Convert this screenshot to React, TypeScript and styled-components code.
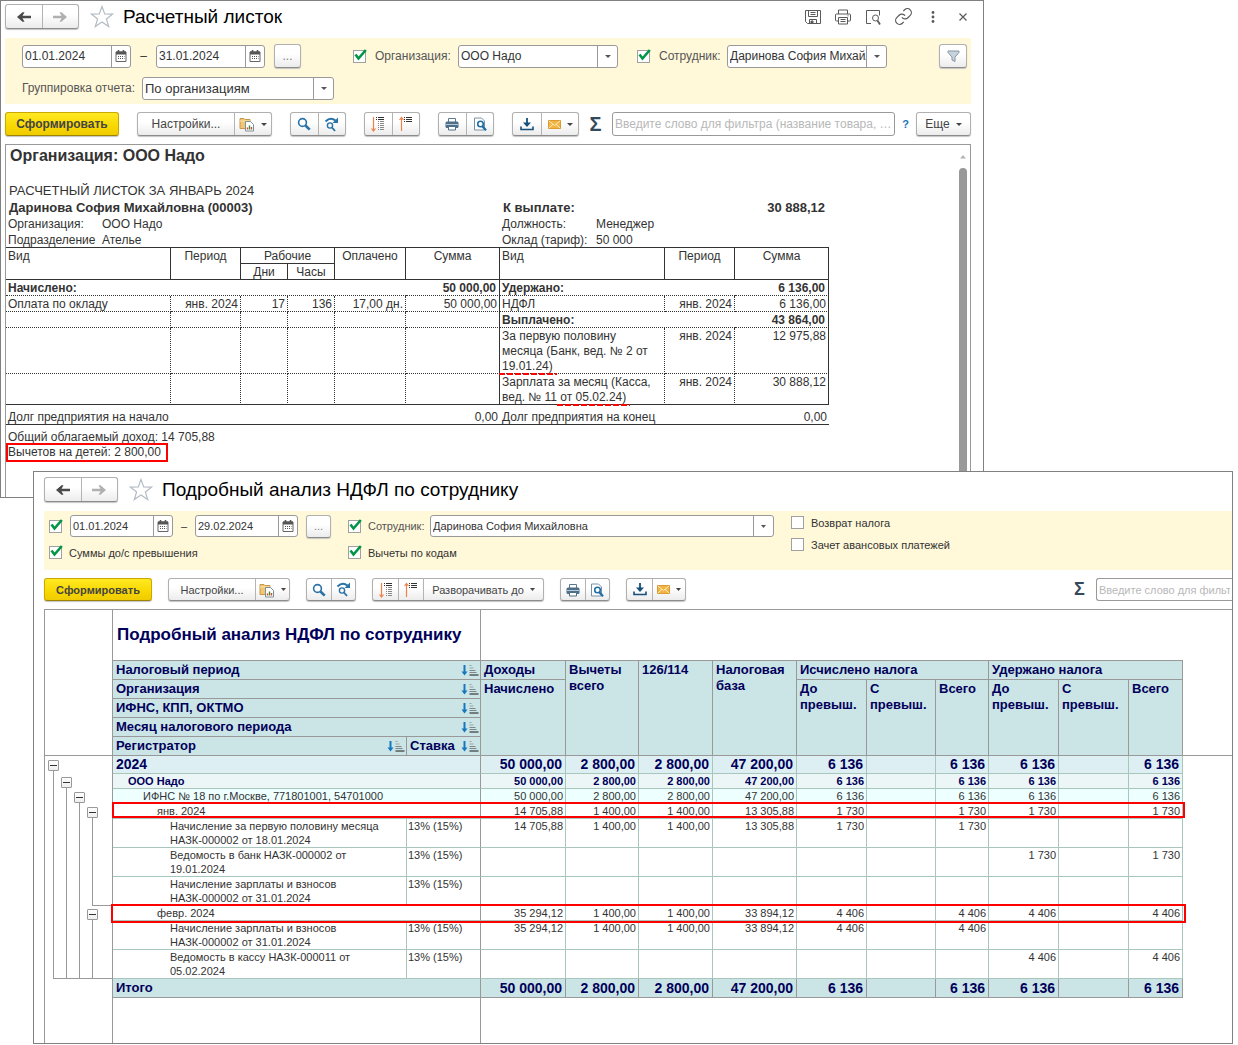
import React from "react";
import styled, { createGlobalStyle, css } from "styled-components";

const Global = createGlobalStyle`
  *, *::before, *::after { box-sizing: border-box; }
  body { margin: 0; background: #fff; }
  button, input, select { font: inherit; color: inherit; margin: 0; }
`;

/* ---------- windows ---------- */

const Desktop = styled.main`
  font-family: "Liberation Sans", Arial, sans-serif;
  color: #333;
  overflow: hidden;
`;

const Window = styled.section<{ $dense?: boolean }>`
  --control: ${(p) => (p.$dense ? "23px" : "24px")};
  --field: ${(p) => (p.$dense ? "22px" : "23px")};
  --text: ${(p) => (p.$dense ? "11px" : "12px")};
  --icon-button: ${(p) => (p.$dense ? "25px" : "28px")};
  --caret: ${(p) => (p.$dense ? "5px" : "6px")};
  --sigma: ${(p) => (p.$dense ? "18px" : "20px")};
  position: relative;
  background: #fff;
  border: 1px solid #808080;
  font-size: var(--text);
  overflow: hidden;
`;

const PayslipWindow = styled(Window)`
  margin-right: 254px;
  padding: 0 12px 0 4px;
`;

const AnalysisWindow = styled(Window)`
  margin: -27px 5px 0 33px;
  padding-left: 10px;
`;

const TitleBar = styled.header<{ $top: number }>`
  display: flex;
  align-items: center;
  padding: ${(p) => p.$top}px 0 9px;
`;

const Title = styled.h1`
  flex: 1;
  margin: 0 0 0 9px;
  font-size: 19px;
  line-height: 24px;
  font-weight: 400;
  color: #000;
`;

const TitleTools = styled.div`
  display: flex;
  gap: 6px;
  margin-right: -4px;
`;

const PlainButton = styled.button`
  display: grid;
  place-items: center;
  width: 24px;
  height: 24px;
  padding: 0;
  border: 0;
  background: none;
  color: #5a5a5a;
`;

const StarButton = styled(PlainButton)`
  margin-left: 11px;
  color: #b4bcc4;
`;

/* ---------- controls ---------- */

const raised = css`
  border: 1px solid #b0b0b0;
  border-bottom-color: #8c8c8c;
  border-radius: 3px;
  background: linear-gradient(#fff 40%, #ececec);
  box-shadow: 0 1px 1px #c4c4c4;
`;

const ButtonGroup = styled.div`
  ${raised}
  display: flex;
  height: var(--control);
  overflow: hidden;
`;

const NavGroup = styled(ButtonGroup)`
  width: 74px;
  height: 25px;
`;

const GroupButton = styled.button<{ $width?: number; $muted?: boolean }>`
  flex: ${(p) => (p.$width ? `0 0 ${p.$width}px` : "1")};
  display: flex;
  align-items: center;
  justify-content: center;
  gap: 6px;
  min-width: 0;
  padding: 0;
  border: 0;
  background: none;
  color: ${(p) => (p.$muted ? "#aaa" : "#444")};
  white-space: nowrap;
  & + & { border-left: 1px solid #b4b4b4; }
`;

const IconPair = styled(ButtonGroup)`
  width: calc(var(--icon-button) * 2);
`;

const Button = styled.button<{ $width: number }>`
  ${raised}
  display: flex;
  align-items: center;
  justify-content: center;
  gap: 6px;
  width: ${(p) => p.$width}px;
  height: var(--control);
  padding: 0;
  color: #444;
`;

const MoreButton = styled(Button)`
  color: #808080;
`;

const PrimaryButton = styled(Button)`
  background: linear-gradient(#ffe924, #f8d800 60%, #efcb00);
  border-color: #c9a800;
  border-bottom-color: #9c8300;
  font-weight: 700;
`;

const FieldBox = styled.div<{ $width: number }>`
  display: flex;
  width: ${(p) => p.$width}px;
  height: var(--field);
  background: #fff;
  border: 1px solid #999;
  border-radius: 3px;
  overflow: hidden;
`;

const FieldInput = styled.input`
  flex: 1;
  min-width: 0;
  padding: 0 0 0 2px;
  border: 0;
  background: none;
  outline: 0;
`;

const FieldButton = styled.button`
  display: grid;
  place-items: center;
  width: 19px;
  padding: 0;
  border: 0;
  border-left: 1px solid #999;
  background: none;
  color: #555;
`;

const ComboBox = styled(FieldBox)`
  display: grid;
  grid-template-columns: 1fr 19px;
`;

const ComboSelect = styled.select<{ $large?: boolean }>`
  grid-area: 1 / 1 / 2 / 2;
  min-width: 0;
  padding: 0 0 0 2px;
  border: 0;
  border-right: 1px solid #999;
  border-radius: 0;
  background: none;
  appearance: none;
  outline: 0;
  overflow: hidden;
  white-space: nowrap;
  font-size: ${(p) => (p.$large ? "13px" : "inherit")};
`;

const ComboArrow = styled.span`
  display: grid;
  place-items: center;
  pointer-events: none;
  color: #555;
`;

const CheckBox = styled.span`
  display: grid;
  width: 13px;
  height: 13px;
  flex: none;
  & > * { grid-area: 1 / 1; }
  & > svg { display: none; pointer-events: none; overflow: visible; }
  & > input:checked + svg { display: block; }
`;

const CheckInput = styled.input`
  appearance: none;
  width: 13px;
  height: 13px;
  border: 1px solid #a0a0a0;
  background: #fff;
`;

const Label = styled.label<{ $width?: number; $strong?: boolean }>`
  width: ${(p) => (p.$width ? `${p.$width}px` : "auto")};
  flex: none;
  color: ${(p) => (p.$strong ? "#333" : "#555")};
  white-space: nowrap;
`;

const Dash = styled.span<{ $width: number }>`
  width: ${(p) => p.$width}px;
  text-align: center;
`;

/* ---------- filter panels and toolbars ---------- */

const Panel = styled.div`
  background: #fff8d9;
`;

const PayslipFilters = styled(Panel)`
  display: grid;
  gap: 8px;
  padding: 6px 4px 4px 17px;
`;

const AnalysisFilters = styled(Panel)`
  display: grid;
  grid-template-columns: 299px 443px 1fr;
  padding: 4px 0 10px 5px;
`;

const FilterColumn = styled.div<{ $gap: number }>`
  display: flex;
  flex-direction: column;
  gap: ${(p) => p.$gap}px;
`;

const FilterRow = styled.div<{ $height: number }>`
  display: flex;
  align-items: center;
  height: ${(p) => p.$height}px;
`;

const CheckSlot = styled.span<{ $after: number; $before?: number }>`
  display: flex;
  margin: 0 ${(p) => p.$after}px 0 ${(p) => p.$before || 0}px;
`;

const Push = styled.span`
  flex: 1;
`;

const Gap = styled.span<{ $width: number }>`
  flex: 0 0 ${(p) => p.$width}px;
`;

const Toolbar = styled.div<{ $gap: number }>`
  display: flex;
  align-items: center;
  gap: ${(p) => p.$gap}px;
  padding: 8px 0;
`;

const ToolbarTail = styled.div<{ $grow?: boolean }>`
  display: flex;
  align-items: center;
  gap: 10px;
  flex: ${(p) => (p.$grow ? "1" : "none")};
  margin-left: ${(p) => (p.$grow ? "-8px" : "auto")};
`;

const SigmaButton = styled.button`
  width: 13px;
  height: var(--control);
  padding: 0;
  border: 0;
  background: none;
  color: #34495a;
  font-size: var(--sigma);
  line-height: var(--control);
  font-weight: 700;
`;

const SearchInput = styled.input<{ $cut?: boolean }>`
  flex: ${(p) => (p.$cut ? "0 0 136px" : "1")};
  min-width: 0;
  height: var(--control);
  padding: 0 2px;
  border: 1px solid #999;
  border-radius: 3px;
  text-overflow: ellipsis;
  &::placeholder { color: #b8b8b8; opacity: 1; }
  ${(p) =>
    p.$cut &&
    css`
      border-right: 0;
      border-radius: 3px 0 0 3px;
      text-overflow: clip;
    `}
`;

const HelpLink = styled.a`
  width: 21px;
  margin: 0 -10px;
  color: #1a76b8;
  font-size: 11px;
  font-weight: 700;
  text-align: center;
  text-decoration: none;
`;

/* ---------- payslip sheet ---------- */

const PayslipSheet = styled.div`
  display: flex;
  justify-content: space-between;
  border: 1px solid #999;
  border-bottom: 0;
`;

const PayslipBody = styled.article`
  width: 823px;
  padding-bottom: 37px;
  font-size: 12px;
  line-height: 15px;
`;

const OrgHeading = styled.h2`
  margin: 0 0 17px 4px;
  padding-top: 1px;
  font-size: 16px;
  line-height: 20px;
`;

const SlipInfo = styled.div`
  display: grid;
  grid-template-columns: 94px 400px 94px 1fr;
  margin-bottom: -1px;
  padding: 0 4px 0 2px;
  line-height: 16px;
`;

const SlipTitle = styled.div`
  grid-column: 1 / -1;
  padding: 0 0 1px 1px;
  font-size: 13px;
`;

const SlipStrong = styled.strong<{ $right?: boolean }>`
  grid-column: ${(p) => (p.$right ? "auto" : "span 2")};
  padding-left: 1px;
  font-size: 13px;
  text-align: ${(p) => (p.$right ? "right" : "left")};
  white-space: nowrap;
`;

const SlipDue = styled(SlipStrong)`
  grid-column: auto;
`;

const SlipTable = styled.table`
  width: 100%;
  table-layout: fixed;
  border-collapse: separate;
  border-spacing: 0;
  border-top: 1px solid #333;
  line-height: 14px;
`;

const SlipHead = styled.th<{ $left?: boolean }>`
  padding: 1px 2px 0;
  border-right: 1px solid #333;
  border-bottom: 1px solid #333;
  font-weight: 400;
  vertical-align: top;
  text-align: ${(p) => (p.$left ? "left" : "center")};
`;

const SlipCell = styled.td<{ $num?: boolean; $edge?: boolean; $bold?: boolean; $last?: boolean }>`
  height: 16px;
  padding: 1px ${(p) => (p.$bold ? 3 : 2)}px 0 2px;
  border-right: 1px ${(p) => (p.$edge ? "solid" : "dotted")} #333;
  border-bottom: 1px ${(p) => (p.$last ? "solid" : "dotted")} #333;
  font-weight: ${(p) => (p.$bold ? 700 : 400)};
  text-align: ${(p) => (p.$num ? "right" : "left")};
  vertical-align: top;
`;

const SectionCell = styled(SlipCell)`
  border-right: 0;
`;

const SlipLines = styled.div`
  margin-bottom: -1px;
  line-height: 15px;
`;

const BalanceCell = styled.td<{ $num?: boolean }>`
  padding: 5px 2px 0;
  border-bottom: 1px solid #333;
  text-align: ${(p) => (p.$num ? "right" : "left")};
`;

const DashMark = styled.span`
  position: relative;
  &::after {
    content: "";
    position: absolute;
    left: -3px;
    right: -4px;
    bottom: -2px;
    height: 2px;
    background: repeating-linear-gradient(90deg, #f00 0 6px, transparent 6px 8px);
  }
`;

const SlipNotes = styled.div`
  padding: 5px 0 0 2px;
`;

const BoxMark = styled.span`
  position: relative;
  &::after {
    content: "";
    position: absolute;
    inset: -2px -7px -3px -2px;
    border: 2px solid #f00;
  }
`;

const ScrollTrack = styled.div`
  display: flex;
  flex-direction: column;
  align-items: center;
  gap: 9px;
  width: 8px;
  margin-right: 3px;
  padding-top: 9px;
  color: #b4b4b4;
`;

const ScrollThumb = styled.div`
  flex: 1;
  width: 8px;
  border-radius: 4px 4px 0 0;
  background: #999;
`;

/* ---------- analysis sheet ---------- */

const NAVY = "#00005a";
const LINE = "#999";
const SOFT = "#a9c6bc";

const AnalysisSheet = styled.div`
  border: 1px solid ${LINE};
  border-width: 1px 0 0 1px;
`;

const Report = styled.table`
  width: 100%;
  table-layout: fixed;
  border-collapse: separate;
  border-spacing: 0;
  font-size: 11px;
  line-height: 14px;
`;

const Corner = styled.td<{ $right?: boolean; $bottom?: boolean }>`
  padding: 0;
  border: 0 solid ${LINE};
  border-right-width: ${(p) => (p.$right ? 1 : 0)}px;
  border-bottom-width: ${(p) => (p.$bottom ? 1 : 0)}px;
`;

const ReportTitle = styled.td`
  height: 51px;
  padding: 0 4px;
  border: 0 solid ${LINE};
  border-width: 0 1px 1px 0;
  color: ${NAVY};
  font-size: 17px;
  line-height: 20px;
  font-weight: 700;
  white-space: nowrap;
`;

const Head = styled.th`
  height: 19px;
  padding: 1px 3px 0;
  border: 0 solid ${LINE};
  border-width: 0 1px 1px 0;
  background: #cbe4e5;
  color: ${NAVY};
  font-size: 13px;
  line-height: 16px;
  font-weight: 700;
  text-align: left;
  vertical-align: top;
`;

const SortHead = styled.span`
  display: flex;
  justify-content: space-between;
  align-items: center;
  margin-right: -2px;
`;

type Level = 0 | 1 | 2 | 3 | 4 | 5;
const levelFill = ["#deeff3", "#edf6f6", "#edffff", "#fff", "#fff", "#cbe4e5"];
const levelIndent = [3, 15, 30, 44, 57, 3];

const levelStyle = css<{ $level: Level }>`
  background: ${(p) => levelFill[p.$level]};
  color: ${(p) => (p.$level < 2 || p.$level === 5 ? NAVY : "#333")};
  font-weight: ${(p) => (p.$level < 2 || p.$level === 5 ? 700 : 400)};
  font-size: ${(p) => (p.$level === 0 || p.$level === 5 ? 14 : 11)}px;
  line-height: ${(p) => (p.$level === 0 ? 17 : p.$level === 5 ? 18 : 14)}px;
  border: 0 solid ${(p) => (p.$level === 5 ? LINE : SOFT)};
  border-width: 0 1px 1px 0;
  vertical-align: top;
`;

const NameCell = styled.th<{ $level: Level }>`
  ${levelStyle}
  padding: 0 2px 0 ${(p) => levelIndent[p.$level]}px;
  border-right-color: ${(p) => (p.$level === 4 ? SOFT : LINE)};
  font-size: ${(p) => (p.$level === 0 ? 14 : p.$level === 5 ? 13 : 11)}px;
  text-align: left;
  white-space: pre-line;
`;

const RateCell = styled.td<{ $level: Level }>`
  ${levelStyle}
  padding: 0 1px;
  border-right-color: ${LINE};
`;

const NumCell = styled.td<{ $level: Level }>`
  ${levelStyle}
  padding: 0 ${(p) => (p.$level === 0 || p.$level === 5 ? 3 : 2)}px 0 0;
  text-align: right;
  white-space: nowrap;
`;

/* Each outline level owns a 13px rail; its line runs through the middle of the rail. */
const railX = (level: number) => 8 + level * 13;

const railLayers = (rails: number, node?: number, close?: number) => {
  const layers: string[] = [];
  const paint = `linear-gradient(${LINE}, ${LINE})`;
  for (let i = 0; i < rails; i++) layers.push(`${paint} ${railX(i)}px 0 / 1px 100% no-repeat`);
  if (node !== undefined) layers.push(`${paint} ${railX(node)}px 100% / 1px calc(100% - 14px) no-repeat`);
  if (close !== undefined) layers.push(`${paint} 100% 100% / calc(100% - ${railX(close)}px) 1px no-repeat`);
  return layers.length ? layers.join(", ") : "none";
};

const TreeCell = styled.td<{ $rails: number; $node?: number; $close?: number }>`
  padding: ${(p) => (p.$node === 0 ? 4 : 3)}px 0 0 ${(p) => 3 + (p.$node || 0) * 13}px;
  border-right: 1px solid ${LINE};
  background: ${(p) => railLayers(p.$rails, p.$node, p.$close)};
  background-origin: border-box;
  vertical-align: top;
`;

const Toggle = styled.button`
  display: grid;
  place-items: center;
  width: 11px;
  height: 11px;
  padding: 0;
  border: 1px solid #999;
  border-radius: 1px;
  background: linear-gradient(#fff, #eee);
  color: #333;
`;

const ReportRow = styled.tr`
  position: relative;
`;

const columnWidths = [68, 294, 74, 85, 73, 74, 84, 70, 69, 53, 70, 70, 54];
const reportWidth = columnWidths.slice(1).reduce((a, b) => a + b, 0);

const RowFrame = styled.span<{ $loose: boolean }>`
  position: absolute;
  z-index: 1;
  left: ${(p) => (p.$loose ? 66 : 67)}px;
  top: -2px;
  bottom: ${(p) => (p.$loose ? -2 : 1)}px;
  width: ${(p) => reportWidth + (p.$loose ? 5 : 3)}px;
  border: 2px solid #f00;
  pointer-events: none;
`;

/* ---------- icons ---------- */

const CaretShape = styled.svg`
  width: var(--caret);
  height: 3px;
  flex: none;
`;

const Caret = () => (
  <CaretShape viewBox="0 0 6 3" preserveAspectRatio="none" aria-hidden="true">
    <path d="M0 0h6L3 3z" fill="currentColor" />
  </CaretShape>
);

const Arrow = ({ back }: { back?: boolean }) => (
  <svg width="16" height="12" viewBox="0 0 16 12" aria-hidden="true">
    <path
      d={
        back
          ? "M1 6L6.500 1.200H8.500L6.500 4.800H15V7.200H6.500L8.500 10.800H6.500z"
          : "M15 6L9.500 1.200H7.500L9.500 4.800H1V7.200H9.500L7.500 10.800H9.500z"
      }
      fill={back ? "#4a4a4a" : "#b0b0b0"}
    />
  </svg>
);

const Star = () => (
  <svg width="24" height="24" viewBox="0 0 24 24" aria-hidden="true">
    <path
      d="M12 1.500l2.700 7.400 8 .2-6.300 4.800 2.300 7.600L12 17l-6.700 4.500 2.300-7.600L1.300 9.100l8-.2z"
      fill="none"
      stroke="currentColor"
      strokeWidth="1.200"
    />
  </svg>
);

const Calendar = () => (
  <svg width="12" height="12" viewBox="0 0 12 12" aria-hidden="true">
    <path d="M1 2h10v9.500H1z" fill="#fff" stroke="#666" />
    <path d="M1 1.500h10V4.500H1z" fill="#555" />
    <path d="M3.500 0v3M8.500 0v3" stroke="#555" strokeWidth="1.600" />
    <path d="M3 6.500h6.500M3 8.500h6.500" stroke="#555" strokeDasharray="1 1" />
  </svg>
);

const Tick = () => (
  <svg width="13" height="13" viewBox="0 0 13 13" aria-hidden="true">
    <path d="M2.500 4.500L5.500 8.500 12.800 0" fill="none" stroke="#009646" strokeWidth="2.600" />
  </svg>
);

const Save = () => (
  <svg width="16" height="16" viewBox="0 0 16 16" fill="none" stroke="currentColor" aria-hidden="true">
    <path d="M.5 1.500h15v13H2.500L.5 12.500z" />
    <path d="M3.500 1.500v6h9v-6M5.500 3.500h5M5.500 5.500h5M4.500 14.500v-4h7v4" />
    <path d="M6 12h2v2H6z" fill="currentColor" />
  </svg>
);

const PrinterLine = () => (
  <svg width="16" height="16" viewBox="0 0 16 16" fill="none" stroke="currentColor" aria-hidden="true">
    <path d="M3.500 5V1h9v4M3.500 12H1.500Q.5 12 .5 11V6q0-1 1-1h13q1 0 1 1v5q0 1-1 1h-2" />
    <path d="M3.500 8.500h9v6.500h-9zM5.500 10.500h5M5.500 12.500h5M12.500 6.800h1" />
  </svg>
);

const PreviewLine = () => (
  <svg width="16" height="16" viewBox="0 0 16 16" fill="none" stroke="currentColor" aria-hidden="true">
    <path d="M6 14.500H1.500V1.500h13v5" />
    <circle cx="10.500" cy="9" r="3" />
    <path d="M12.500 11.500L15 15.500" strokeWidth="1.800" />
  </svg>
);

const LinkIcon = () => (
  <svg width="19" height="19" viewBox="0 0 24 24" fill="none" stroke="currentColor" strokeWidth="1.500" aria-hidden="true">
    <path d="M10 13a5 5 0 0 0 7.540.540l3-3a5 5 0 0 0-7.070-7.070l-1.720 1.710" />
    <path d="M14 11a5 5 0 0 0-7.540-.540l-3 3a5 5 0 0 0 7.070 7.070l1.710-1.710" />
  </svg>
);

const Dots = () => (
  <svg width="4" height="12" viewBox="0 0 4 12" fill="currentColor" aria-hidden="true">
    <circle cx="2" cy="1.500" r="1.400" />
    <circle cx="2" cy="6" r="1.400" />
    <circle cx="2" cy="10.500" r="1.400" />
  </svg>
);

const Cross = () => (
  <svg width="8" height="8" viewBox="0 0 8 8" aria-hidden="true">
    <path d="M.5.5l7 7M7.500.5l-7 7" stroke="currentColor" strokeWidth="1.200" />
  </svg>
);

const Funnel = () => (
  <svg width="13" height="13" viewBox="0 0 13 13" aria-hidden="true">
    <path d="M1 1h11v1.500L8 7v4.500L5 10V7L1 2.500z" fill="#c9d3dc" stroke="#8495a3" />
  </svg>
);

const FolderReport = () => (
  <svg width="16" height="16" viewBox="0 0 16 16" aria-hidden="true">
    <path d="M1 2.500h4l1 1h5v9H1z" fill="#f0c673" stroke="#c9974a" />
    <path d="M1 5h10" stroke="#fbe3ae" />
    <path d="M6.500 5.500h5l3 3v6.500h-8z" fill="#fff" stroke="#7c8f9c" />
    <path d="M8.500 13.500v-2" stroke="#d04a2a" strokeWidth="1.400" />
    <path d="M10.500 13.500V9.500" stroke="#3c8a3c" strokeWidth="1.400" />
    <path d="M12.500 13.500V11" stroke="#d04a2a" strokeWidth="1.400" />
  </svg>
);

const Magnifier = () => (
  <svg width="14" height="14" viewBox="0 0 14 14" fill="none" stroke="#2a73a8" aria-hidden="true">
    <circle cx="5.500" cy="5.500" r="3.900" strokeWidth="1.600" />
    <path d="M8.500 8.500l4.200 4.200" strokeWidth="2.600" />
  </svg>
);

const SearchNext = () => (
  <svg width="15" height="15" viewBox="0 0 15 15" fill="none" stroke="#2a73a8" aria-hidden="true">
    <path d="M1.500 4.500Q6.500-.5 11.500 3.500" strokeWidth="2" />
    <path d="M14 .5V6H8.500z" fill="#2a73a8" stroke="none" />
    <circle cx="6" cy="8.500" r="2.600" strokeWidth="1.400" />
    <path d="M8 10.500l3 3.500" strokeWidth="1.900" />
  </svg>
);

const Expand = () => (
  <svg width="14" height="16" viewBox="0 0 14 16" fill="none" aria-hidden="true">
    <path d="M2.500 1v14M.5 12.500l2 2.500 2-2.500" stroke="#f08048" strokeWidth="1.200" />
    <path d="M5 1.500h1M5 3.500h1M7 1.500h6M7 3.500h6" stroke="#333" />
    <path d="M7 5.500h1M7 7.500h1M9 5.500h4M9 7.500h4M7 9.500h1M9 9.500h4M7 11.500h1M9 11.500h4M7 13.500h1M9 13.500h4" stroke="#888" />
  </svg>
);

const Collapse = () => (
  <svg width="14" height="16" viewBox="0 0 14 16" fill="none" aria-hidden="true">
    <path d="M2.500 15V1.500M.5 4l2-2.500 2 2.500" stroke="#f08048" strokeWidth="1.200" />
    <path d="M5 1.500h1M5 3.500h1M5 5.500h1M7 1.500h6M7 3.500h6M7 5.500h6" stroke="#333" />
  </svg>
);

const Printer = () => (
  <svg width="14" height="14" viewBox="0 0 14 14" aria-hidden="true">
    <path d="M3.500 5V1.500h7V5" fill="#fff" stroke="#5a7890" />
    <path d="M2 4.500h10q1.500 0 1.500 1.500V9.500q0 1.500-1.500 1.500H2Q.5 11 .5 9.500V6Q.5 4.500 2 4.500z" fill="#4f6f88" />
    <path d="M1 7.500h12" stroke="#b8cad8" />
    <path d="M3.500 9.500h7v3.500h-7z" fill="#fff" stroke="#4f6f88" />
  </svg>
);

const Preview = () => (
  <svg width="14" height="14" viewBox="0 0 14 14" fill="none" aria-hidden="true">
    <path d="M1.500 1h7l3 3v9h-10z" fill="#fff" stroke="#7891a5" />
    <circle cx="7.500" cy="7" r="2.800" stroke="#1f6ea6" strokeWidth="1.600" />
    <path d="M9.500 9.500l3.500 3.800" stroke="#1f6ea6" strokeWidth="2.200" />
  </svg>
);

const Download = () => (
  <svg width="14" height="13" viewBox="0 0 14 13" aria-hidden="true">
    <path d="M7 0v6" stroke="#14507c" strokeWidth="1.800" />
    <path d="M3 4.500h8L7 9z" fill="#14507c" />
    <path d="M1 8.500v3h12v-3" fill="none" stroke="#14507c" strokeWidth="1.600" />
  </svg>
);

const Envelope = () => (
  <svg width="13" height="9" viewBox="0 0 13 9" aria-hidden="true">
    <path d="M.5.5h12v8H.5z" fill="#f2b544" stroke="#dc9c34" />
    <path d="M1 1l5.500 4.500L12 1M1 8l4-3.800M12 8L8 4.200" fill="none" stroke="#fdeac0" />
  </svg>
);

const Sort = () => (
  <svg width="18" height="12" viewBox="0 0 18 12" aria-hidden="true">
    <path d="M3.500 1v7" stroke="#1478be" strokeWidth="2" />
    <path d="M.5 7.500h6l-3 4z" fill="#1478be" />
    <path d="M8.500 1.500h2M8.500 4h4" stroke="#9aa4a6" />
    <path d="M8.500 6.500h6M8.500 8.500h7" stroke="#7d8688" />
    <path d="M8.500 11h9" stroke="#4a5254" strokeWidth="1.400" />
  </svg>
);

const Minus = () => (
  <svg width="7" height="1" viewBox="0 0 7 1" aria-hidden="true">
    <path d="M0 0h7v1H0z" fill="currentColor" />
  </svg>
);

const ScrollUp = () => (
  <svg width="6" height="5" viewBox="0 0 6 5" aria-hidden="true">
    <path d="M0 4.500L3 1l3 3.500z" fill="currentColor" />
  </svg>
);

/* ---------- composed controls ---------- */

const Navigation = () => (
  <NavGroup>
    <GroupButton aria-label="Назад"><Arrow back /></GroupButton>
    <GroupButton aria-label="Вперед" $muted><Arrow /></GroupButton>
  </NavGroup>
);

const DateField = ({ value, label, width }: { value: string; label: string; width: number }) => (
  <FieldBox $width={width}>
    <FieldInput defaultValue={value} aria-label={label} />
    <FieldButton aria-label={`${label}: календарь`}><Calendar /></FieldButton>
  </FieldBox>
);

const Combo = ({ id, value, width, large }: { id: string; value: string; width: number; large?: boolean }) => (
  <ComboBox $width={width}>
    <ComboSelect id={id} defaultValue={value} $large={large}>
      <option>{value}</option>
    </ComboSelect>
    <ComboArrow><Caret /></ComboArrow>
  </ComboBox>
);

const Check = ({ id, on, label, after, before }: { id?: string; on?: boolean; label?: string; after: number; before?: number }) => (
  <CheckSlot $after={after} $before={before}>
    <CheckBox>
      <CheckInput type="checkbox" id={id} defaultChecked={on} aria-label={label} />
      <Tick />
    </CheckBox>
  </CheckSlot>
);

const SearchButtons = () => (
  <IconPair>
    <GroupButton aria-label="Найти"><Magnifier /></GroupButton>
    <GroupButton aria-label="Найти далее"><SearchNext /></GroupButton>
  </IconPair>
);

const PrintButtons = () => (
  <IconPair>
    <GroupButton aria-label="Печать"><Printer /></GroupButton>
    <GroupButton aria-label="Предварительный просмотр"><Preview /></GroupButton>
  </IconPair>
);

const SettingsButtons = ({ first, second }: { first: number; second: number }) => (
  <ButtonGroup>
    <GroupButton $width={first}>Настройки...</GroupButton>
    <GroupButton $width={second} aria-label="Варианты отчета"><FolderReport /><Caret /></GroupButton>
  </ButtonGroup>
);

const SendButtons = ({ first, second }: { first: number; second: number }) => (
  <ButtonGroup>
    <GroupButton $width={first} aria-label="Сохранить в файл"><Download /></GroupButton>
    <GroupButton $width={second} aria-label="Отправить"><Envelope /><Caret /></GroupButton>
  </ButtonGroup>
);

const filterHint = "Введите слово для фильтра (название товара, покупателя и пр.)";

/* ---------- payslip ---------- */

const slipColumns = [165, 70, 47, 47, 71, 94, 165, 70, 94];

const Blank = ({ last }: { last?: boolean }) => (
  <>
    {[0, 1, 2, 3, 4, 5].map((i) => (
      <SlipCell key={i} $edge={i === 5} $last={last} />
    ))}
  </>
);

const Payslip = () => (
  <PayslipBody>
    <OrgHeading>Организация: ООО Надо</OrgHeading>
    <SlipInfo>
      <SlipTitle>РАСЧЕТНЫЙ ЛИСТОК ЗА ЯНВАРЬ 2024</SlipTitle>
      <SlipStrong>Даринова София Михайловна (00003)</SlipStrong>
      <SlipDue>К выплате:</SlipDue>
      <SlipStrong $right>30 888,12</SlipStrong>
      <span>Организация:</span>
      <span>ООО Надо</span>
      <span>Должность:</span>
      <span>Менеджер</span>
      <span>Подразделение</span>
      <span>Ателье</span>
      <span>Оклад (тариф):</span>
      <span>50 000</span>
    </SlipInfo>
    <SlipTable>
      <colgroup>
        {slipColumns.map((w, i) => <col key={i} style={{ width: w }} />)}
      </colgroup>
      <thead>
        <tr>
          <SlipHead rowSpan={2} $left>Вид</SlipHead>
          <SlipHead rowSpan={2}>Период</SlipHead>
          <SlipHead colSpan={2}>Рабочие</SlipHead>
          <SlipHead rowSpan={2}>Оплачено</SlipHead>
          <SlipHead rowSpan={2}>Сумма</SlipHead>
          <SlipHead rowSpan={2} $left>Вид</SlipHead>
          <SlipHead rowSpan={2}>Период</SlipHead>
          <SlipHead rowSpan={2}>Сумма</SlipHead>
        </tr>
        <tr>
          <SlipHead>Дни</SlipHead>
          <SlipHead>Часы</SlipHead>
        </tr>
      </thead>
      <tbody>
        <tr>
          <SectionCell colSpan={5} $bold>Начислено:</SectionCell>
          <SlipCell $num $bold $edge>50 000,00</SlipCell>
          <SectionCell colSpan={2} $bold>Удержано:</SectionCell>
          <SlipCell $num $bold $edge>6 136,00</SlipCell>
        </tr>
        <tr>
          <SlipCell>Оплата по окладу</SlipCell>
          <SlipCell $num>янв. 2024</SlipCell>
          <SlipCell $num>17</SlipCell>
          <SlipCell $num>136</SlipCell>
          <SlipCell $num>17,00 дн.</SlipCell>
          <SlipCell $num $edge>50 000,00</SlipCell>
          <SlipCell>НДФЛ</SlipCell>
          <SlipCell $num>янв. 2024</SlipCell>
          <SlipCell $num $edge>6 136,00</SlipCell>
        </tr>
        <tr>
          <Blank />
          <SectionCell colSpan={2} $bold>Выплачено:</SectionCell>
          <SlipCell $num $bold $edge>43 864,00</SlipCell>
        </tr>
        <tr>
          <Blank />
          <SlipCell>
            <SlipLines>
              <div>За первую половину</div>
              <div>месяца (Банк, вед. № 2 от</div>
              <div><DashMark>19.01.24)</DashMark></div>
            </SlipLines>
          </SlipCell>
          <SlipCell $num>янв. 2024</SlipCell>
          <SlipCell $num $edge>12 975,88</SlipCell>
        </tr>
        <tr>
          <Blank last />
          <SlipCell $last>
            <SlipLines>
              <div>Зарплата за месяц (Касса,</div>
              <div>вед. № 11 <DashMark>от 05.02.24)</DashMark></div>
            </SlipLines>
          </SlipCell>
          <SlipCell $num $last>янв. 2024</SlipCell>
          <SlipCell $num $edge $last>30 888,12</SlipCell>
        </tr>
        <tr>
          <BalanceCell colSpan={5}>Долг предприятия на начало</BalanceCell>
          <BalanceCell $num>0,00</BalanceCell>
          <BalanceCell colSpan={2}>Долг предприятия на конец</BalanceCell>
          <BalanceCell $num>0,00</BalanceCell>
        </tr>
      </tbody>
    </SlipTable>
    <SlipNotes>
      <div>Общий облагаемый доход: 14 705,88</div>
      <div><BoxMark>Вычетов на детей: 2 800,00</BoxMark></div>
    </SlipNotes>
  </PayslipBody>
);

/* ---------- analysis ---------- */

type Row = {
  level: Level;
  name: string;
  rate?: string;
  values: string[];
  rails: number;
  node?: number;
  close?: number;
  frame?: "tight" | "loose";
};

const rows: Row[] = [
  { level: 0, name: "2024", rails: 0, node: 0, values: ["50 000,00", "2 800,00", "2 800,00", "47 200,00", "6 136", "", "6 136", "6 136", "", "6 136"] },
  { level: 1, name: "ООО Надо", rails: 1, node: 1, values: ["50 000,00", "2 800,00", "2 800,00", "47 200,00", "6 136", "", "6 136", "6 136", "", "6 136"] },
  { level: 2, name: "ИФНС № 18 по г.Москве, 771801001, 54701000", rails: 2, node: 2, values: ["50 000,00", "2 800,00", "2 800,00", "47 200,00", "6 136", "", "6 136", "6 136", "", "6 136"] },
  { level: 3, name: "янв. 2024", rails: 3, node: 3, frame: "tight", values: ["14 705,88", "1 400,00", "1 400,00", "13 305,88", "1 730", "", "1 730", "1 730", "", "1 730"] },
  { level: 4, name: "Начисление за первую половину месяца\nНАЗК-000002 от 18.01.2024", rate: "13% (15%)", rails: 4, values: ["14 705,88", "1 400,00", "1 400,00", "13 305,88", "1 730", "", "1 730", "", "", ""] },
  { level: 4, name: "Ведомость в банк НАЗК-000002 от\n19.01.2024", rate: "13% (15%)", rails: 4, values: ["", "", "", "", "", "", "", "1 730", "", "1 730"] },
  { level: 4, name: "Начисление зарплаты и взносов\nНАЗК-000002 от 31.01.2024", rate: "13% (15%)", rails: 4, close: 3, values: ["", "", "", "", "", "", "", "", "", ""] },
  { level: 3, name: "февр. 2024", rails: 3, node: 3, frame: "loose", values: ["35 294,12", "1 400,00", "1 400,00", "33 894,12", "4 406", "", "4 406", "4 406", "", "4 406"] },
  { level: 4, name: "Начисление зарплаты и взносов\nНАЗК-000002 от 31.01.2024", rate: "13% (15%)", rails: 4, values: ["35 294,12", "1 400,00", "1 400,00", "33 894,12", "4 406", "", "4 406", "", "", ""] },
  { level: 4, name: "Ведомость в кассу НАЗК-000011 от\n05.02.2024", rate: "13% (15%)", rails: 4, close: 0, values: ["", "", "", "", "", "", "", "4 406", "", "4 406"] },
  { level: 5, name: "Итого", rails: 0, values: ["50 000,00", "2 800,00", "2 800,00", "47 200,00", "6 136", "", "6 136", "6 136", "", "6 136"] },
];

const SortedTitle = ({ children }: { children: string }) => (
  <SortHead>{children}<Sort /></SortHead>
);

const Analysis = () => (
  <Report>
    <colgroup>
      {columnWidths.map((w, i) => <col key={i} style={{ width: w }} />)}
      <col />
    </colgroup>
    <thead>
      <tr>
        <Corner rowSpan={6} $right $bottom />
        <ReportTitle colSpan={2}>Подробный анализ НДФЛ по сотруднику</ReportTitle>
        <Corner colSpan={10} $bottom />
        <Corner rowSpan={6} $bottom />
      </tr>
      <tr>
        <Head colSpan={2}><SortedTitle>Налоговый период</SortedTitle></Head>
        <Head>Доходы</Head>
        <Head rowSpan={5}>Вычеты всего</Head>
        <Head rowSpan={5}>126/114</Head>
        <Head rowSpan={5}>Налоговая база</Head>
        <Head colSpan={3}>Исчислено налога</Head>
        <Head colSpan={3}>Удержано налога</Head>
      </tr>
      <tr>
        <Head colSpan={2}><SortedTitle>Организация</SortedTitle></Head>
        <Head rowSpan={4}>Начислено</Head>
        <Head rowSpan={4}>До превыш.</Head>
        <Head rowSpan={4}>С превыш.</Head>
        <Head rowSpan={4}>Всего</Head>
        <Head rowSpan={4}>До превыш.</Head>
        <Head rowSpan={4}>С превыш.</Head>
        <Head rowSpan={4}>Всего</Head>
      </tr>
      <tr><Head colSpan={2}><SortedTitle>ИФНС, КПП, ОКТМО</SortedTitle></Head></tr>
      <tr><Head colSpan={2}><SortedTitle>Месяц налогового периода</SortedTitle></Head></tr>
      <tr>
        <Head><SortedTitle>Регистратор</SortedTitle></Head>
        <Head><SortedTitle>Ставка</SortedTitle></Head>
      </tr>
    </thead>
    <tbody>
      {rows.map((row, i) => (
        <ReportRow key={i}>
          <TreeCell $rails={row.rails} $node={row.node} $close={row.close}>
            {row.node !== undefined && <Toggle aria-label={`Свернуть ${row.name}`}><Minus /></Toggle>}
          </TreeCell>
          <NameCell scope="row" $level={row.level} colSpan={row.rate ? 1 : 2}>
            {row.name}
            {row.frame && <RowFrame $loose={row.frame === "loose"} />}
          </NameCell>
          {row.rate && <RateCell $level={row.level}>{row.rate}</RateCell>}
          {row.values.map((v, k) => <NumCell key={k} $level={row.level}>{v}</NumCell>)}
          <Corner />
        </ReportRow>
      ))}
      <tr style={{ height: 45 }}>
        <Corner $right />
        <Corner colSpan={2} $right />
        <Corner colSpan={11} />
      </tr>
    </tbody>
  </Report>
);

/* ---------- page ---------- */

export default function App() {
  return (
    <Desktop>
      <Global />
      <PayslipWindow>
        <TitleBar $top={3}>
          <Navigation />
          <StarButton aria-label="В избранное"><Star /></StarButton>
          <Title>Расчетный листок</Title>
          <TitleTools>
            <PlainButton aria-label="Сохранить"><Save /></PlainButton>
            <PlainButton aria-label="Печать"><PrinterLine /></PlainButton>
            <PlainButton aria-label="Просмотр"><PreviewLine /></PlainButton>
            <PlainButton aria-label="Ссылка"><LinkIcon /></PlainButton>
            <PlainButton aria-label="Меню"><Dots /></PlainButton>
            <PlainButton aria-label="Закрыть"><Cross /></PlainButton>
          </TitleTools>
        </TitleBar>
        <PayslipFilters>
          <FilterRow $height={24}>
            <DateField value="01.01.2024" label="Начало периода" width={109} />
            <Dash $width={25}>–</Dash>
            <DateField value="31.01.2024" label="Конец периода" width={109} />
            <Gap $width={9} />
            <MoreButton $width={27} aria-label="Выбрать период">...</MoreButton>
            <Check on label="Отбор по организации" before={52} after={9} />
            <Label htmlFor="slip-org" $width={83}>Организация:</Label>
            <Combo id="slip-org" value="ООО Надо" width={160} />
            <Check on label="Отбор по сотруднику" before={19} after={9} />
            <Label htmlFor="slip-person" $width={68}>Сотрудник:</Label>
            <Combo id="slip-person" value="Даринова София Михайловна" width={160} />
            <Push />
            <Button $width={28} aria-label="Отбор"><Funnel /></Button>
          </FilterRow>
          <FilterRow $height={24}>
            <Label htmlFor="slip-group" $width={120}>Группировка отчета:</Label>
            <Combo id="slip-group" value="По организациям" width={192} large />
          </FilterRow>
        </PayslipFilters>
        <Toolbar $gap={18}>
          <PrimaryButton $width={114}>Сформировать</PrimaryButton>
          <SettingsButtons first={96} second={37} />
          <SearchButtons />
          <IconPair>
            <GroupButton aria-label="Развернуть группы"><Expand /></GroupButton>
            <GroupButton aria-label="Свернуть группы"><Collapse /></GroupButton>
          </IconPair>
          <PrintButtons />
          <SendButtons first={28} second={37} />
          <ToolbarTail $grow>
            <SigmaButton aria-label="Сумма">Σ</SigmaButton>
            <SearchInput placeholder={filterHint} aria-label="Фильтр" />
            <HelpLink href="#help">?</HelpLink>
            <Button $width={55}>Еще <Caret /></Button>
          </ToolbarTail>
        </Toolbar>
        <PayslipSheet>
          <Payslip />
          <ScrollTrack>
            <ScrollUp />
            <ScrollThumb />
          </ScrollTrack>
        </PayslipSheet>
      </PayslipWindow>

      <AnalysisWindow $dense>
        <TitleBar $top={5}>
          <Navigation />
          <StarButton aria-label="В избранное"><Star /></StarButton>
          <Title>Подробный анализ НДФЛ по сотруднику</Title>
        </TitleBar>
        <AnalysisFilters>
          <FilterColumn $gap={8}>
            <FilterRow $height={22}>
              <Check on label="Период" after={8} />
              <DateField value="01.01.2024" label="Начало" width={103} />
              <Dash $width={22}>–</Dash>
              <DateField value="29.02.2024" label="Конец" width={103} />
              <Gap $width={8} />
              <MoreButton $width={25} aria-label="Выбрать период">...</MoreButton>
            </FilterRow>
            <FilterRow $height={15}>
              <Check on id="over" after={7} />
              <Label htmlFor="over" $strong>Суммы до/с превышения</Label>
            </FilterRow>
          </FilterColumn>
          <FilterColumn $gap={8}>
            <FilterRow $height={22}>
              <Check on label="Отбор по сотруднику" after={7} />
              <Label htmlFor="tax-person" $width={62}>Сотрудник:</Label>
              <Combo id="tax-person" value="Даринова София Михайловна" width={344} />
            </FilterRow>
            <FilterRow $height={15}>
              <Check on id="codes" after={7} />
              <Label htmlFor="codes" $strong>Вычеты по кодам</Label>
            </FilterRow>
          </FilterColumn>
          <FilterColumn $gap={7}>
            <FilterRow $height={15}>
              <Check id="refund" after={7} />
              <Label htmlFor="refund" $strong>Возврат налога</Label>
            </FilterRow>
            <FilterRow $height={15}>
              <Check id="advance" after={7} />
              <Label htmlFor="advance" $strong>Зачет авансовых платежей</Label>
            </FilterRow>
          </FilterColumn>
        </AnalysisFilters>
        <Toolbar $gap={16}>
          <PrimaryButton $width={108}>Сформировать</PrimaryButton>
          <SettingsButtons first={86} second={34} />
          <SearchButtons />
          <ButtonGroup>
            <GroupButton $width={25} aria-label="Развернуть группы"><Expand /></GroupButton>
            <GroupButton $width={25} aria-label="Свернуть группы"><Collapse /></GroupButton>
            <GroupButton $width={120}>Разворачивать до <Caret /></GroupButton>
          </ButtonGroup>
          <PrintButtons />
          <SendButtons first={25} second={33} />
          <ToolbarTail>
            <SigmaButton aria-label="Сумма">Σ</SigmaButton>
            <SearchInput $cut placeholder={filterHint} aria-label="Фильтр" />
          </ToolbarTail>
        </Toolbar>
        <AnalysisSheet>
          <Analysis />
        </AnalysisSheet>
      </AnalysisWindow>
    </Desktop>
  );
}
